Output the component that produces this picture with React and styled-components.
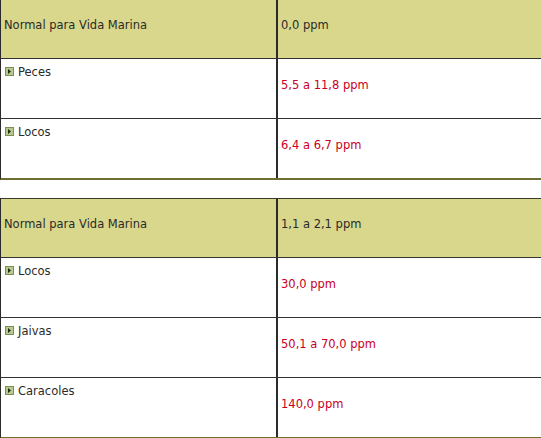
import React from "react";
import styled, { createGlobalStyle } from "styled-components";

const Global = createGlobalStyle`
  html, body { margin: 0; padding: 0; background: #fff; overflow: hidden; }
  body { font-family: Tahoma, "DejaVu Sans", Verdana, sans-serif; }
`;

const Page = styled.div`
  width: 541px;
  display: flex;
  flex-direction: column;
  gap: 18px;
`;

const Table = styled.div`
  display: flex;
  flex-direction: column;
  border-left: 1px solid #2b2b2b;
  border-top: ${(p) => (p.$top ? "1px solid #3a3a2a" : "none")};
  border-bottom: 2px solid #6e6d32;
`;

const Row = styled.div`
  display: grid;
  grid-template-columns: 275px 1fr;
  height: ${(p) => (p.$head ? "58px" : "59px")};
  background: ${(p) => (p.$head ? "#d9d78b" : "#ffffff")};
  border-top: ${(p) => (p.$first ? "none" : "1px solid #333333")};
`;

const Cell = styled.div`
  display: flex;
  align-items: ${(p) => (p.$top ? "flex-start" : "center")};
  padding: ${(p) => (p.$top ? "6px 3px 0 3px" : "0 3px 8px 3px")};
  border-left: ${(p) => (p.$divider ? "2px solid #2b2b2b" : "none")};
  font-size: 11.5px;
  color: ${(p) => (p.$red ? "#c8001e" : "#2a2a2a")};
  white-space: nowrap;
`;

const Bullet = styled.span`
  display: inline-flex;
  align-items: center;
  justify-content: center;
  width: 9px;
  height: 9px;
  margin: 2px 4px 0 1px;
  box-sizing: border-box;
  background: #b7c98e;
  border: 1px solid #7c8e5a;
`;

function Arrow() {
  return (
    <Bullet>
      <svg width="5" height="5" viewBox="0 0 5 5">
        <path d="M1 0 L4 2.5 L1 5 Z" fill="#1e2a10" />
      </svg>
    </Bullet>
  );
}

const tables = [
  {
    head: "0,0 ppm",
    rows: [
      ["Peces", "5,5 a 11,8 ppm"],
      ["Locos", "6,4 a 6,7 ppm"],
    ],
  },
  {
    head: "1,1 a 2,1 ppm",
    rows: [
      ["Locos", "30,0 ppm"],
      ["Jaivas", "50,1 a 70,0 ppm"],
      ["Caracoles", "140,0 ppm"],
    ],
  },
];

export default function App() {
  return (
    <>
      <Global />
      <Page>
        {tables.map((t, i) => (
          <Table key={i} $top={i > 0}>
            <Row $head $first>
              <Cell>Normal para Vida Marina</Cell>
              <Cell $divider>{t.head}</Cell>
            </Row>
            {t.rows.map(([name, val]) => (
              <Row key={name}>
                <Cell $top>
                  <Arrow />
                  {name}
                </Cell>
                <Cell $divider $red>
                  {val}
                </Cell>
              </Row>
            ))}
          </Table>
        ))}
      </Page>
    </>
  );
}
